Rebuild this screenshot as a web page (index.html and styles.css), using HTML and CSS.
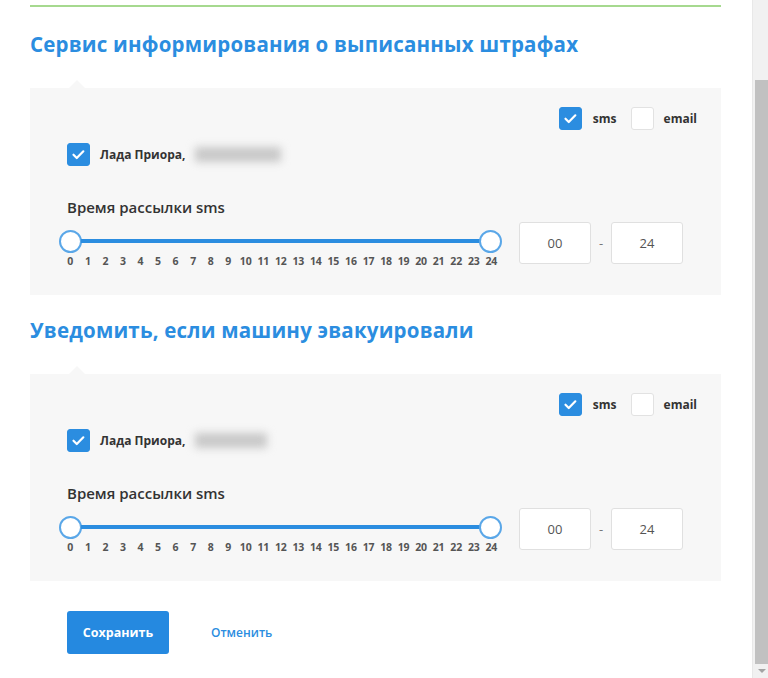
FILE: index.html
```html
<!DOCTYPE html>
<html lang="ru">
<head>
<meta charset="utf-8">
<title>Уведомления</title>
<link rel="stylesheet" href="styles.css">
</head>
<body>
<div class="page">
  <div class="divider"></div>

  <h2 class="title">Сервис информирования о выписанных штрафах</h2>
  <section class="panel">
    <div class="channels">
      <span class="cb checked"><svg viewBox="0 0 23 23"><path d="M6 11.8l3.6 3.6 7.2-7.4" fill="none" stroke="#fff" stroke-width="2.4" stroke-linecap="round" stroke-linejoin="round"/></svg></span>
      <span class="cb-label">sms</span>
      <span class="cb"></span>
      <span class="cb-label">email</span>
    </div>
    <div class="car">
      <span class="cb checked"><svg viewBox="0 0 23 23"><path d="M6 11.8l3.6 3.6 7.2-7.4" fill="none" stroke="#fff" stroke-width="2.4" stroke-linecap="round" stroke-linejoin="round"/></svg></span>
      <span class="car-label">Лада Приора,</span>
      <span class="blur"></span>
    </div>
    <div class="time-label">Время рассылки sms</div>
    <div class="time-row">
      <div class="slider">
        <div class="track-row">
          <span class="handle"></span>
          <span class="track"></span>
          <span class="handle"></span>
        </div>
        <div class="ticks">
          <span>0</span><span>1</span><span>2</span><span>3</span><span>4</span><span>5</span><span>6</span><span>7</span><span>8</span><span>9</span><span>10</span><span>11</span><span>12</span><span>13</span><span>14</span><span>15</span><span>16</span><span>17</span><span>18</span><span>19</span><span>20</span><span>21</span><span>22</span><span>23</span><span>24</span>
        </div>
      </div>
      <div class="time-box">00</div>
      <span class="dash">-</span>
      <div class="time-box">24</div>
    </div>
  </section>

  <h2 class="title title-second">Уведомить, если машину эвакуировали</h2>
  <section class="panel">
    <div class="channels">
      <span class="cb checked"><svg viewBox="0 0 23 23"><path d="M6 11.8l3.6 3.6 7.2-7.4" fill="none" stroke="#fff" stroke-width="2.4" stroke-linecap="round" stroke-linejoin="round"/></svg></span>
      <span class="cb-label">sms</span>
      <span class="cb"></span>
      <span class="cb-label">email</span>
    </div>
    <div class="car">
      <span class="cb checked"><svg viewBox="0 0 23 23"><path d="M6 11.8l3.6 3.6 7.2-7.4" fill="none" stroke="#fff" stroke-width="2.4" stroke-linecap="round" stroke-linejoin="round"/></svg></span>
      <span class="car-label">Лада Приора,</span>
      <span class="blur blur-short"></span>
    </div>
    <div class="time-label">Время рассылки sms</div>
    <div class="time-row">
      <div class="slider">
        <div class="track-row">
          <span class="handle"></span>
          <span class="track"></span>
          <span class="handle"></span>
        </div>
        <div class="ticks">
          <span>0</span><span>1</span><span>2</span><span>3</span><span>4</span><span>5</span><span>6</span><span>7</span><span>8</span><span>9</span><span>10</span><span>11</span><span>12</span><span>13</span><span>14</span><span>15</span><span>16</span><span>17</span><span>18</span><span>19</span><span>20</span><span>21</span><span>22</span><span>23</span><span>24</span>
        </div>
      </div>
      <div class="time-box">00</div>
      <span class="dash">-</span>
      <div class="time-box">24</div>
    </div>
  </section>

  <div class="actions">
    <button class="btn-save" type="button">Сохранить</button>
    <a class="btn-cancel" href="#">Отменить</a>
  </div>
</div>
<div class="scrollbar">
  <div class="thumb"></div>
  <div class="arrow"></div>
</div>
</body>
</html>
```
FILE: styles.css
```css
* { box-sizing: border-box; }

html, body {
  margin: 0;
  padding: 0;
  height: 678px;
  overflow: hidden;
  background: #fff;
}

body {
  display: flex;
  font-family: "Open Sans", "Noto Sans", sans-serif;
  color: #333;
}

.page {
  flex: 1;
  padding: 5px 31px 0 30px;
}

.divider {
  height: 2px;
  background: #a6d98f;
}

.title {
  margin: 24px 0 0;
  font-size: 20.5px;
  line-height: 26px;
  font-weight: 700;
  color: #2b8de0;
  letter-spacing: 0.2px;
}

.title-second {
  margin-top: 22px;
}

.panel {
  position: relative;
  margin-top: 31px;
  height: 207px;
  background: #f7f7f7;
  padding: 19px 24px 0 37px;
}

.panel::before {
  content: "";
  position: absolute;
  left: 39px;
  top: -8px;
  border-left: 8px solid transparent;
  border-right: 8px solid transparent;
  border-bottom: 8px solid #f7f7f7;
}

.channels {
  display: flex;
  justify-content: flex-end;
  align-items: center;
  height: 23px;
}

.cb {
  width: 23px;
  height: 23px;
  border-radius: 3px;
  background: #fff;
  border: 1px solid #e2e2e2;
  flex: none;
  display: block;
}

.cb.checked {
  background: #2b8de0;
  border-color: #2b8de0;
}

.cb svg {
  display: block;
  width: 21px;
  height: 21px;
}

.cb-label {
  font-size: 12px;
  font-weight: 700;
  color: #333;
  margin: 0 15px 0 11px;
}

.cb-label:last-child {
  margin-right: 0;
  margin-left: 10px;
}

.channels .cb:first-child + .cb-label {
  margin-right: 14px;
}

.car {
  display: flex;
  align-items: center;
  height: 23px;
  margin-top: 13px;
}

.car-label {
  font-size: 12px;
  font-weight: 700;
  color: #333;
  margin-left: 10px;
}

.blur {
  width: 86px;
  height: 15px;
  margin-left: 10px;
  background: #c8c8c8;
  filter: blur(4px);
}

.blur-short {
  width: 72px;
}

.time-label {
  margin-top: 31px;
  font-size: 15px;
  line-height: 20px;
  font-weight: 600;
  color: #333;
}

.time-row {
  display: flex;
  align-items: flex-start;
  margin-top: 5px;
}

.slider {
  width: 443px;
  margin-left: -8px;
  padding-top: 8px;
}

.track-row {
  display: flex;
  align-items: center;
  height: 22px;
}

.handle {
  width: 23px;
  height: 23px;
  border-radius: 50%;
  background: #fff;
  border: 2px solid #5aa7e8;
  flex: none;
}

.track {
  flex: 1;
  height: 4px;
  background: #2b8de0;
  margin: 0 -1px;
}

.ticks {
  display: grid;
  grid-template-columns: repeat(25, 1fr);
  width: 438.5px;
  margin: 3px 0 0 2.5px;
  font-size: 10.5px;
  line-height: 12px;
  font-weight: 700;
  color: #555;
  text-align: center;
  letter-spacing: -0.2px;
}

.time-box {
  width: 72px;
  height: 42px;
  background: #fff;
  border: 1px solid #e0e0e0;
  border-radius: 3px;
  display: flex;
  align-items: center;
  justify-content: center;
  font-size: 13px;
  color: #555;
  flex: none;
}

.slider + .time-box {
  margin-left: 17px;
}

.dash {
  width: 20px;
  text-align: center;
  line-height: 42px;
  font-size: 13px;
  color: #777;
}

.actions {
  display: flex;
  align-items: center;
  margin-top: 30px;
  padding-left: 37px;
}

.btn-save {
  width: 102px;
  height: 43px;
  border: none;
  border-radius: 3px;
  background: #2589e0;
  color: #fff;
  font-family: inherit;
  font-size: 12.5px;
  font-weight: 700;
  padding: 0;
}

.btn-cancel {
  margin-left: 42px;
  font-size: 12px;
  font-weight: 600;
  color: #2b8de0;
  text-decoration: none;
}

.scrollbar {
  width: 16px;
  flex: none;
  background: #f1f1f1;
  border-left: 1px solid #e8e8e8;
  display: flex;
  flex-direction: column;
  padding: 80px 0 0 2px;
}

.thumb {
  height: 584px;
  background: #c1c1c1;
}

.arrow {
  margin: 5px auto 0;
  width: 0;
  height: 0;
  border-left: 4px solid transparent;
  border-right: 4px solid transparent;
  border-top: 4px solid #a3a3a3;
}
```
